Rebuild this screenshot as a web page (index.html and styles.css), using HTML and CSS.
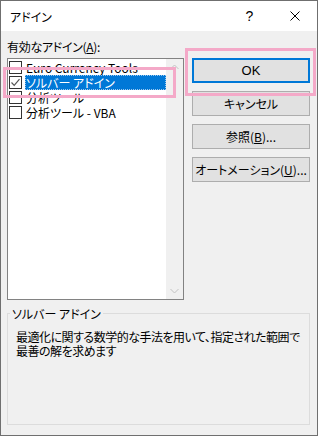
FILE: index.html
```html
<!DOCTYPE html>
<html>
  <head>
    <meta charset="utf-8" />
    <title>アドイン</title>
    <link rel="stylesheet" href="styles.css">
  </head>
  <body>
    <div class="window">
      <div class="titlebar">
        <span class="title">アドイン</span>
        <span class="caption-btn help">?</span>
        <span class="caption-btn close">
          <svg width="10" height="10" viewBox="0 0 10 10">
            <path d="M0.5 0.5 L9.5 9.5 M9.5 0.5 L0.5 9.5" stroke="#000" stroke-width="1" fill="none" />
          </svg>
        </span>
      </div>
      <div class="body">
        <div class="top">
          <div class="left">
            <div class="caption">有効なアドイン(<u>A</u>):</div>
            <div class="listbox">
              <ul class="items">
                <li class="item"><span class="check"></span><span class="name">Euro Currency Tools</span></li>
                <li class="item selected">
                  <span class="check">
                    <svg width="11" height="11" viewBox="0 0 11 11">
                      <path d="M1.5 5.5 L4.2 8.3 L9.5 2.2" stroke="#555" stroke-width="1.2" fill="none" />
                    </svg>
                  </span>
                  <span class="name">ソルバー アドイン</span>
                </li>
                <li class="item"><span class="check"></span><span class="name">分析ツール</span></li>
                <li class="item"><span class="check"></span><span class="name">分析ツール - VBA</span></li>
              </ul>
              <div class="scrollbar">
                <svg width="9" height="6" viewBox="0 0 9 6">
                  <path d="M0.5 5 L4.5 1 L8.5 5" stroke="#c2c2c2" stroke-width="1" fill="none" />
                </svg>
                <svg width="9" height="6" viewBox="0 0 9 6">
                  <path d="M0.5 1 L4.5 5 L8.5 1" stroke="#c2c2c2" stroke-width="1" fill="none" />
                </svg>
              </div>
            </div>
          </div>
          <div class="buttons">
            <button class="btn default">OK</button>
            <button class="btn">キャンセル</button>
            <button class="btn">参照(<u>B</u>)...</button>
            <button class="btn">オートメーション(<u>U</u>)...</button>
          </div>
        </div>
        <fieldset class="group">
          <legend>ソルバー アドイン</legend>
          <p class="desc">最適化に関する数学的な手法を用いて、指定された範囲で<br>最善の解を求めます</p>
        </fieldset>
      </div>
      <!-- pink highlight marks drawn over the dialog -->
      <div class="mark mark-row"></div>
      <div class="mark mark-ok"></div>
    </div>
  </body>
</html>
```

FILE: styles.css
```css
body {
  margin: 0;
}

.window {
  position: relative;
  width: 318px;
  height: 436px;
  box-sizing: border-box;
  border: 1px solid #6f6f6f;
  background: #f0f0f0;
  display: flex;
  flex-direction: column;
  font-family: "Noto Sans CJK JP", "Noto Sans", sans-serif;
  font-size: 12px;
  font-feature-settings: "palt";
  color: #000;
}

.titlebar {
  height: 30px;
  background: #fff;
  display: flex;
  align-items: center;
  padding-left: 9px;
}

.title {
  flex: 1;
}

.caption-btn {
  width: 45px;
  height: 30px;
  display: flex;
  align-items: center;
  justify-content: center;
}

.help {
  font-family: "Liberation Sans", sans-serif;
  font-size: 14px;
}

.body {
  flex: 1;
  display: flex;
  flex-direction: column;
  padding: 8px 7px 10px 6px;
}

.top {
  display: flex;
  gap: 8px;
}

.left {
  width: 177px;
}

.caption {
  line-height: 15px;
  height: 15px;
  letter-spacing: -0.3px;
}

.listbox {
  margin-top: 4px;
  height: 242px;
  box-sizing: border-box;
  border: 1px solid #828282;
  background: #fff;
  display: flex;
}

.items {
  flex: 1;
  list-style: none;
  margin: 0;
  padding: 1px 0 0 0;
}

.item {
  display: flex;
  align-items: center;
  height: 15px;
  line-height: 15px;
  overflow: hidden;
}

.check {
  width: 13px;
  height: 13px;
  box-sizing: border-box;
  border: 1px solid #333;
  background: #fff;
  margin: 0 3px 0 1px;
  display: flex;
  align-items: center;
  justify-content: center;
}

.name {
  flex: 1;
  padding-left: 1px;
  height: 15px;
  box-sizing: border-box;
  white-space: nowrap;
}

.selected .name {
  background: #0078d7;
  color: #fff;
  border: 1px dotted #9cc8ee;
  line-height: 13px;
  padding-left: 0;
}

.scrollbar {
  width: 17px;
  background: #f0f0f0;
  display: flex;
  flex-direction: column;
  justify-content: space-between;
  align-items: center;
  padding: 5px 0 5px;
}

.buttons {
  width: 118px;
  margin-top: 19px;
  display: flex;
  flex-direction: column;
  gap: 8px;
}

.btn {
  height: 25px;
  box-sizing: border-box;
  border: 1px solid #adadad;
  background: #e1e1e1;
  font: inherit;
  color: #000;
  padding: 0;
}

.btn.default {
  border: 2px solid #0078d7;
  font-family: "Liberation Sans", sans-serif;
  font-size: 13px;
}

.group {
  flex: 1;
  margin: 6px 0 0 0;
  padding: 0 8px;
  border: 1px solid #dcdcdc;
  min-width: 0;
}

.group legend {
  margin-left: -6px;
  padding: 0 2px;
  line-height: 15px;
}

.desc {
  margin: 9px 0 0;
  line-height: 14px;
  white-space: nowrap;
  letter-spacing: -0.5px;
}

.mark {
  position: absolute;
  border: 3px solid #f4a9c8;
  box-sizing: border-box;
}

.mark-row {
  left: 2px;
  top: 66px;
  width: 173px;
  height: 31px;
}

.mark-ok {
  left: 184px;
  top: 47px;
  width: 131px;
  height: 48px;
}
```
